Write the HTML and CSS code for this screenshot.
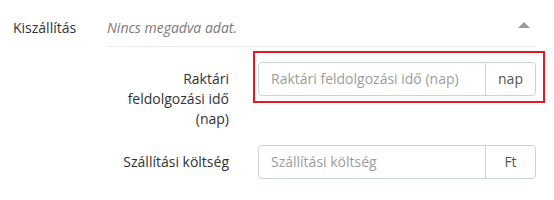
FILE: index.html
```html
<!DOCTYPE html>
<html lang="hu">
<head>
<meta charset="utf-8">
<link rel="stylesheet" href="styles.css">
</head>
<body>
<div class="section">
  <div class="section-label">Kiszállítás</div>
  <div class="section-body">
    <div class="section-head">
      <span class="empty">Nincs megadva adat.</span>
      <span class="caret-up"></span>
    </div>
    <div class="form-row">
      <label class="control-label">Raktári feldolgozási idő (nap)</label>
      <div class="input-group highlighted">
        <input class="form-control" type="text" placeholder="Raktári feldolgozási idő (nap)">
        <span class="addon">nap</span>
      </div>
    </div>
    <div class="form-row">
      <label class="control-label">Szállítási költség</label>
      <div class="input-group">
        <input class="form-control" type="text" placeholder="Szállítási költség">
        <span class="addon">Ft</span>
      </div>
    </div>
  </div>
</div>
</body>
</html>
```
FILE: styles.css
```css
html, body {
  margin: 0;
  padding: 0;
  background: #fff;
}
body {
  font-family: "Open Sans", "DejaVu Sans", sans-serif;
  font-size: 14px;
  line-height: 20px;
  color: #333;
}
.section {
  display: flex;
  padding: 18px 0 0 13px;
}
.section-label {
  width: 93px;
  flex: none;
}
.section-body {
  width: 430px;
  flex: none;
}
.section-head {
  display: flex;
  justify-content: space-between;
  align-items: center;
  padding: 0 0 8px 1px;
  border-bottom: 1px solid #ececec;
  margin-bottom: 15px;
}
.empty {
  font-style: italic;
  color: #7a7a7a;
}
.caret-up {
  width: 0;
  height: 0;
  border-left: 6.5px solid transparent;
  border-right: 6.5px solid transparent;
  border-bottom: 6px solid #9a9a9a;
  margin: 0 6px 6px 0;
}
.form-row {
  display: flex;
  align-items: flex-start;
  margin-bottom: 16px;
}
.control-label {
  width: 123px;
  flex: none;
  text-align: right;
  padding-top: 7px;
  margin-right: 29px;
}
.input-group {
  position: relative;
  display: flex;
  width: 278px;
  height: 34px;
  box-sizing: border-box;
  border: 1px solid #ccd2da;
  border-radius: 4px;
}
.input-group.highlighted::after {
  content: "";
  position: absolute;
  left: -6px;
  top: -12px;
  right: -10px;
  bottom: -8px;
  border: 2px solid #e01b22;
  pointer-events: none;
}
.form-control {
  flex: 1;
  min-width: 0;
  border: none;
  outline: none;
  background: transparent;
  padding: 0 12px;
  font: inherit;
  color: #555;
}
.form-control::placeholder {
  color: #9c9c9c;
}
.addon {
  width: 49px;
  flex: none;
  border-left: 1px solid #ccd2da;
  display: flex;
  align-items: center;
  justify-content: center;
  color: #555;
}
```
